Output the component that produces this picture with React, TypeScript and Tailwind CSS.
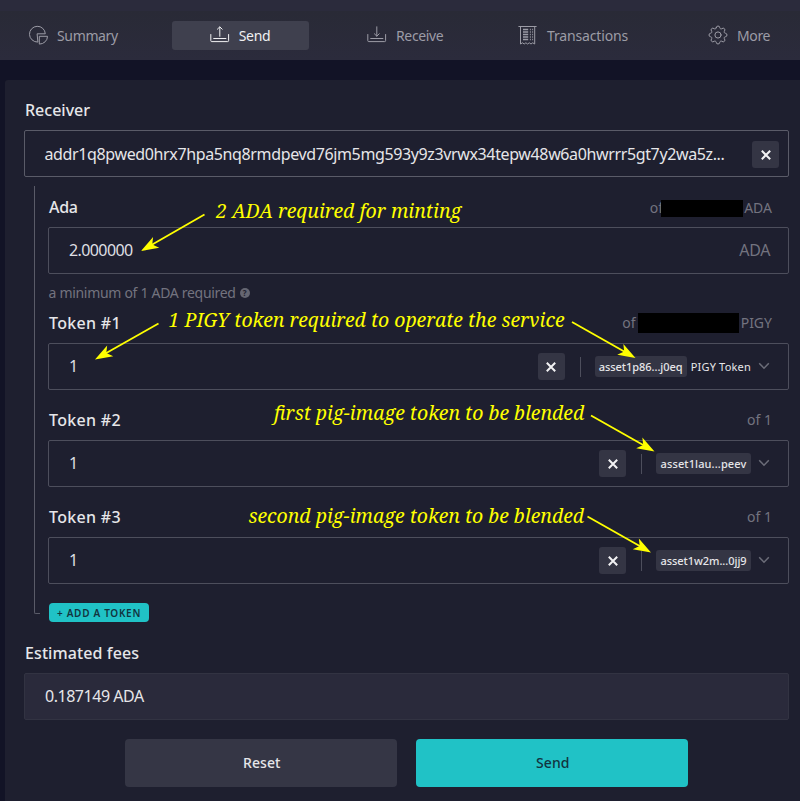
import React from "react";

type IconProps = { children: React.ReactNode; className?: string };

const Icon = ({ children, className = "" }: IconProps) => (
  <svg
    viewBox="0 0 20 20"
    fill="none"
    stroke="currentColor"
    strokeWidth="1"
    strokeLinecap="round"
    strokeLinejoin="round"
    className={`h-5 w-5 shrink-0 -translate-y-px ${className}`}
  >
    {children}
  </svg>
);

const SummaryIcon = () => (
  <Icon>
    <path d="M9.500 17.100A7.900 7.900 0 1 1 17.300 8.800H9.500z" />
    <path d="M11.700 11.300h7.800a7.800 7.800 0 0 1-7.800 7.800z" />
  </Icon>
);

const SendIcon = () => (
  <Icon>
    <path d="M.8 9.500v6.200q0 .9.9.9h16q.9 0 .9-.9V9.500" />
    <path d="M3.700 13.500h12.200M9.800 11.300V2.200M7.400 4.200L9.800 1.800l2.400 2.400" />
  </Icon>
);

const ReceiveIcon = () => (
  <Icon>
    <path d="M.8 9.500v6.200q0 .9.9.9h16q.9 0 .9-.9V9.500" />
    <path d="M3.700 13.500h12.200M9.800 1.800v9.200M7.400 8.800l2.400 2.400 2.400-2.400" />
  </Icon>
);

const TransactionsIcon = () => (
  <Icon>
    <path d="M.8 1.500h17.400" />
    <path d="M2.500 1.500v17.500l2-1.200 1.700 1.200 1.700-1.200 1.700 1.200 1.700-1.200 1.700 1.200 1.700-1.200 2 1.200V1.500" />
    <path d="M5 4.500h5.200M5 7h5.200M5 9.500h5.200M5 12h5.200M5 14.500h5.200M11.900 4.500h.9M11.900 7h.9M11.900 9.500h.9M11.900 12h.9M11.900 14.500h.9M14.200 4.500h.9M14.200 7h.9M14.200 9.500h.9M14.200 12h.9M14.200 14.500h.9" strokeWidth="1.300" strokeLinecap="butt" />
  </Icon>
);

const MoreIcon = () => (
  <Icon>
    <circle cx="10" cy="10" r="3.100" />
    <path d="M8.200 2.800Q8.300 1 10 1t1.800 1.800q.1.700.8 1t1.400-.2q1.300-1 2.400.1t0 2.500q-.4.600-.1 1.300t1 .7Q19 8.400 19 10t-1.700 1.800q-.7 0-1 .7t.1 1.300q1.100 1.400 0 2.500t-2.400.1q-.7-.5-1.400-.2t-.8 1Q11.700 19 10 19t-1.800-1.800q-.1-.7-.8-1t-1.400.2q-1.300 1-2.400-.1t0-2.500q.4-.600.1-1.300t-1-.7Q1 11.600 1 10t1.700-1.800q.7 0 1-.7T3.600 6.200q-1.100-1.400 0-2.500T6 3.600q.7.500 1.400.2t.8-1z" />
  </Icon>
);

const ClearButton = ({ className = "" }: { className?: string }) => (
  <button className={`flex h-[27px] w-[27px] shrink-0 items-center justify-center rounded-[3px] bg-[#343544] text-[#f2f2f4] ${className}`}>
    <svg viewBox="0 0 10 10" className="h-[10px] w-[10px]" stroke="currentColor" strokeWidth="2">
      <path d="M.8.8l8.400 8.400M9.200.8L.8 9.200" />
    </svg>
  </button>
);

type LabelProps = { text: string; spacing: string; children?: React.ReactNode };

const Label = ({ text, spacing, children }: LabelProps) => (
  <div className="flex h-6 items-center justify-between">
    <span className={`ml-px text-[16px] font-medium text-[#e6e6e9] ${spacing}`}>{text}</span>
    {children}
  </div>
);

type TokenProps = { n: number; asset: string; chip: string; name?: string; balance: React.ReactNode };

const TokenField = ({ n, asset, chip, name, balance }: TokenProps) => (
  <div>
    <Label text={`Token #${n}`} spacing="tracking-[0.3px]">
      <span className="mr-[17px] flex items-center text-[14px] text-[#73737f]">{balance}</span>
    </Label>
    <div className="mt-2 flex h-[47px] items-center rounded-[2px] border border-[#4d4e5c] pr-[18px] pl-5">
      <span className="grow -translate-y-px text-[16px] text-[#dfdfe3]">1</span>
      <ClearButton className="mr-[15px]" />
      <span className="mr-[14px] h-5 w-px bg-[#4d4e5c]" />
      <span className={`flex h-[21px] items-center justify-center rounded-[3px] bg-[#343544] text-[11px] font-medium text-[#e6e6e9] ${chip}`}>{asset}</span>
      {name && <span className="ml-1 text-[11px] tracking-[0.2px] text-[#e6e6e9]">{name}</span>}
      <svg viewBox="0 0 12 8" className="ml-[7px] h-2 w-3 -translate-y-px" fill="none" stroke="#6b6c78" strokeWidth="1.500">
        <path d="M1.200 1.200L6 6.200l4.800-5" />
      </svg>
    </div>
  </div>
);

const Arrow = ({ from, to }: { from: [number, number]; to: [number, number] }) => {
  const angle = (Math.atan2(to[1] - from[1], to[0] - from[0]) * 180) / Math.PI;
  const length = Math.hypot(to[0] - from[0], to[1] - from[1]);
  return (
    <g transform={`translate(${to[0]} ${to[1]}) rotate(${angle})`}>
      <path d={`M${-length} 0H-12`} stroke="#ffff00" strokeWidth="1.800" />
      <path d="M0 0L-17.500-6.200L-13 0L-17.500 6.200z" fill="#ffff00" />
    </g>
  );
};

const noteClass =
  "absolute whitespace-nowrap font-['Noto_Serif','Droid_Serif','DejaVu_Serif',serif] text-[19.45px] leading-6 italic text-[#ffff00]";

export default function App() {
  return (
    <div className="relative h-[801px] w-[800px] overflow-hidden bg-[#121326] font-['Noto_Sans',sans-serif] leading-none">
      <nav className="h-[60px] bg-[#2b2b3c] pt-[11px]">
        <div className="flex h-[49px] items-center bg-linear-to-b from-[#292a36] to-[#2b2b3c] text-[14px] tracking-[-0.35px] text-[#9c9ca6]">
          <div className="ml-[28px] flex w-[144px] items-center gap-[9px]"><SummaryIcon /><span>Summary</span></div>
          <div className="flex h-[29px] w-[137px] items-center justify-center gap-[9px] rounded-[3px] bg-[#3f404e] pr-px text-[#f0f0f2]"><SendIcon /><span>Send</span></div>
          <div className="ml-[58px] flex w-[151px] items-center gap-[9px]"><ReceiveIcon /><span>Receive</span></div>
          <div className="flex w-[190px] items-center gap-[9px]"><TransactionsIcon /><span className="tracking-[-0.15px]">Transactions</span></div>
          <div className="flex items-center gap-[9px]"><MoreIcon /><span>More</span></div>
        </div>
      </nav>

      <main className="mt-5 ml-[5px] h-[721px] rounded-tl-[3px] bg-[#1e1f2f] pt-[18px] pr-[11px] pl-[19px]">
        <Label text="Receiver" spacing="tracking-normal" />
        <div className="mt-2 flex h-[47px] items-center justify-between rounded-[2px] border border-[#5a5b68] pr-[9px] pl-5">
          <span className="-translate-x-[0.5px] text-[16px] tracking-[-0.37px] whitespace-nowrap text-[#e6e6e9]">addr1q8pwed0hrx7hpa5nq8rmdpevd76jm5mg593y9z3vrwx34tepw48w6a0hwrrr5gt7y2wa5z...</span>
          <ClearButton className="translate-y-px" />
        </div>

        <section className="mt-[9px] flex">
          <div className="ml-[10px] h-[428px] w-[6px] shrink-0 rounded-bl-[2px] border-b border-l border-[#5a5b68]" />
          <div className="ml-2 grow pt-[9px]">
            <Label text="Ada" spacing="tracking-[-0.3px]">
              <span className="mr-[17px] flex translate-y-px items-center text-[14px] text-[#73737f]">
                of<span className="mr-px -ml-[2px] h-[17px] w-[82px] bg-black" />ADA
              </span>
            </Label>
            <div className="mt-2 flex h-[47px] items-center justify-between rounded-[2px] border border-[#4d4e5c] pr-[18px] pl-5 text-[16px]">
              <span className="-translate-y-px tracking-[-0.6px] text-[#dfdfe3]">2.000000</span>
              <span className="-translate-y-px tracking-[-0.36px] text-[#73737f]">ADA</span>
            </div>
            <div className="flex h-[37px] items-center gap-1 pt-px pl-[0.5px] text-[14px] text-[#73737f]">
              <span className="tracking-[-0.3px]">a minimum of 1 ADA required</span>
              <span className="flex h-[10px] w-[10px] items-center justify-center rounded-full bg-[#656672] text-[8px] font-bold text-[#1e1f2f]">?</span>
            </div>
            <div className="flex flex-col gap-[18px]">
              <TokenField n={1} asset="asset1p86...j0eq" chip="w-[92px] tracking-[-0.04px]" name="PIGY Token" balance={<>of<span className="mr-[2px] ml-[2px] h-[20px] w-[101px] bg-black" />PIGY</>} />
              <TokenField n={2} asset="asset1lau...peev" chip="w-[95px] tracking-[0.12px]" balance="of 1" />
              <TokenField n={3} asset="asset1w2m...0jj9" chip="w-[95px] tracking-[-0.04px]" balance="of 1" />
            </div>
            <button className="mt-[19px] ml-[0.5px] flex h-[19px] w-[100px] items-center justify-center rounded-[4px] bg-[#20c2c6] pl-px text-[10px] font-semibold tracking-[0.7px] text-[#12343f]">+ ADD A TOKEN</button>
          </div>
        </section>

        <div className="mt-[19px]"><Label text="Estimated fees" spacing="tracking-[0.1px]" /></div>
        <div className="mt-2 flex h-[47px] items-center rounded-[2px] border border-[#323342] bg-[#2a2a3b] pl-5 text-[16px] text-[#e6e6e9]"><span className="-translate-y-px tracking-[-0.47px]">0.187149 ADA</span></div>
        <div className="mt-[19px] ml-[101.3px] flex gap-[19px] text-[14px] font-medium tracking-[0.1px]">
          <button className="h-12 w-[272px] rounded-[4px] bg-[#353645] pl-px text-[#e6e6e9]">Reset</button>
          <button className="h-12 w-[272px] rounded-[4px] bg-[#20c2c6] pl-px text-[#12343f]">Send</button>
        </div>
      </main>

      <div className={`${noteClass} top-[199px] left-[216px]`}>2 ADA required for minting</div>
      <div className={`${noteClass} top-[308px] left-[168.5px]`}>1 PIGY token required to operate the service</div>
      <div className={`${noteClass} top-[401px] left-[274px]`}>first pig-image token to be blended</div>
      <div className={`${noteClass} top-[504px] left-[248.5px]`}>second pig-image token to be blended</div>
      <svg className="pointer-events-none absolute inset-0 h-[801px] w-[800px]" viewBox="0 0 800 801">
        <Arrow from={[204.500, 214.500]} to={[141, 251]} />
        <Arrow from={[158.500, 323.500]} to={[95, 359.500]} />
        <Arrow from={[572, 322]} to={[635.500, 358]} />
        <Arrow from={[591, 415.500]} to={[654.500, 451.500]} />
        <Arrow from={[587.500, 516.500]} to={[651, 552.500]} />
      </svg>
    </div>
  );
}
